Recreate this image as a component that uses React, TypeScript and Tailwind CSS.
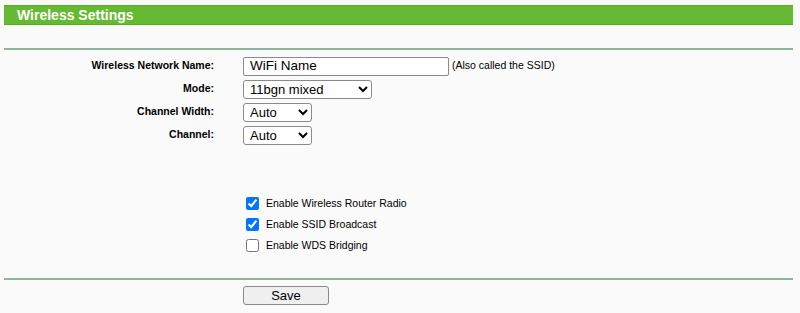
import React from 'react'

const fields = [
  { label: 'Wireless Network Name:', kind: 'text' },
  { label: 'Mode:', kind: 'mode' },
  { label: 'Channel Width:', kind: 'width' },
  { label: 'Channel:', kind: 'channel' },
]

const options = [
  { label: 'Enable Wireless Router Radio', checked: true },
  { label: 'Enable SSID Broadcast', checked: true },
  { label: 'Enable WDS Bridging', checked: false },
]

export default function App() {
  return (
    <div className="w-[800px] h-[313px] bg-[#fafafa] overflow-hidden pt-[5px] px-[4px] text-black font-['Liberation_Sans',Arial,sans-serif]">
      {/* Header */}
      <div className="w-[789px] h-[20px] bg-[#66b933] border-y border-[#56ad1f] flex items-center pl-[13px]">
        <span className="text-white font-bold text-[14px] leading-none">Wireless Settings</span>
      </div>

      <div className="w-[789px] mt-[23px] h-[2px] bg-[#8cb59b]" />

      {/* Form */}
      <div className="mt-[6px] flex flex-col gap-[3px]">
        {fields.map((f) => (
          <div key={f.label} className="flex items-center h-[20px]">
            <div className="w-[210px] text-right font-bold text-[10.5px]">{f.label}</div>
            <div className="pl-[29px] flex items-center">
              {f.kind === 'text' && (
                <>
                  <input
                    defaultValue="WiFi Name"
                    className="w-[206px] h-[19px] bg-white border border-[#8a8a8a] rounded-[2px] px-[6px] text-[13.5px]"
                  />
                  <span className="ml-[3px] text-[10.5px]">(Also called the SSID)</span>
                </>
              )}
              {f.kind === 'mode' && (
                <select defaultValue="11bgn mixed" className="w-[129px] h-[19px] bg-white border border-[#8a8a8a] rounded-[3px] text-[13px] pl-[2px]">
                  <option>11bgn mixed</option>
                  <option>11bg mixed</option>
                  <option>11n only</option>
                </select>
              )}
              {(f.kind === 'width' || f.kind === 'channel') && (
                <select defaultValue="Auto" className="w-[69px] h-[19px] bg-white border border-[#8a8a8a] rounded-[3px] text-[13px] pl-[2px]">
                  <option>Auto</option>
                  <option>20MHz</option>
                  <option>40MHz</option>
                </select>
              )}
            </div>
          </div>
        ))}
      </div>

      <div className="mt-[52px] ml-[242px] flex flex-col gap-[8px]">
        {options.map((o) => (
          <label key={o.label} className="flex items-center h-[13px] text-[10.5px]">
            <input type="checkbox" defaultChecked={o.checked} className="w-[13px] h-[13px] m-0" />
            <span className="ml-[7px]">{o.label}</span>
          </label>
        ))}
      </div>

      <div className="w-[789px] mt-[26px] h-[2px] bg-[#8cb59b]" />

      <button className="mt-[6px] ml-[239px] w-[86px] h-[19px] bg-[#efefef] border border-[#8a8a8a] rounded-[3px] text-[13px] leading-none">
        Save
      </button>
    </div>
  )
}
